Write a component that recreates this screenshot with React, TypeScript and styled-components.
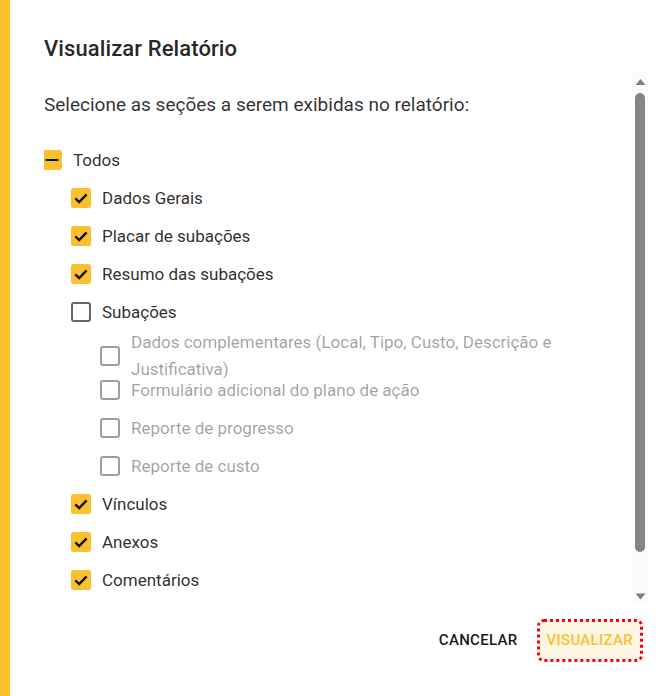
import { createGlobalStyle, styled } from "styled-components";

const YELLOW = "#fbc02d";

const GlobalStyle = createGlobalStyle`
  html, body {
    margin: 0;
    padding: 0;
  }
  body {
    font-family: Roboto, "Noto Sans", Arial, sans-serif;
    background: #fff;
  }
  * {
    box-sizing: border-box;
  }
`;

const Screen = styled.div`
  width: 670px;
  height: 696px;
  display: flex;
  border-left: 10px solid ${YELLOW};
  background: #fff;
  overflow: hidden;
`;

const Dialog = styled.section`
  flex: 1;
  display: flex;
  flex-direction: column;
  padding: 33px 0 0 34px;
`;

const Title = styled.h2`
  margin: 0;
  font-size: 22px;
  font-weight: 500;
  line-height: 32px;
  letter-spacing: 0.1px;
  color: rgba(0, 0, 0, 0.87);
`;

const Body = styled.div`
  display: flex;
  height: 533px;
  margin: 7px 22px 0 0;
`;

const Content = styled.div`
  flex: 1;
  overflow: hidden;
  padding-top: 21px;
`;

const ScrollBar = styled.div`
  width: 15px;
  display: flex;
  flex-direction: column;
  background: #fbfbfb;
`;

const ScrollArrow = styled.div`
  height: 15px;
  display: flex;
`;

const ScrollTrack = styled.div`
  flex: 1;
  padding: 6px 3px 0 2px;
`;

const Thumb = styled.div`
  height: 459px;
  border-radius: 5px;
  background: #858585;
`;

const Intro = styled.p`
  margin: 0 0 24px;
  font-size: 19px;
  line-height: 24px;
  color: rgba(0, 0, 0, 0.82);
`;

const List = styled.div`
  display: flex;
  flex-direction: column;
`;

const Row = styled.label<{ $level: number; $tall?: boolean }>`
  display: flex;
  align-items: center;
  gap: 11px;
  height: ${(p) => (p.$tall ? 40 : 38)}px;
  padding-top: ${(p) => (p.$tall ? 10 : 0)}px;
  margin-left: ${(p) => p.$level * 29 - 2}px;
  cursor: pointer;
`;

const Label = styled.span<{ $disabled?: boolean; $tall?: boolean }>`
  font-size: 17px;
  line-height: ${(p) => (p.$tall ? 27 : 24)}px;
  color: ${(p) => (p.$disabled ? "rgba(0, 0, 0, 0.38)" : "rgba(0, 0, 0, 0.84)")};
`;

const Actions = styled.div`
  display: flex;
  justify-content: flex-end;
  align-items: center;
  gap: 14px;
  padding: 17px 30px 0 0;
`;

const Button = styled.button<{ $primary?: boolean }>`
  font-family: inherit;
  font-size: 15px;
  font-weight: 500;
  letter-spacing: 0.3px;
  text-transform: uppercase;
  line-height: 25px;
  padding: 6px ${(p) => (p.$primary ? 7 : 8)}px;
  border: none;
  border-radius: 4px;
  cursor: pointer;
  color: ${(p) => (p.$primary ? YELLOW : "rgba(0, 0, 0, 0.92)")};
  background: ${(p) => (p.$primary ? "#fef6e4" : "transparent")};
  outline: ${(p) => (p.$primary ? "3px dotted #ff0000" : "none")};
`;

type BoxState = "checked" | "unchecked" | "indeterminate";

function Box({ state, disabled }: { state: BoxState; disabled?: boolean }) {
  if (state === "unchecked") {
    return (
      <svg width="20" height="20" viewBox="0 0 20 20" style={{ flex: "none" }}>
        <rect
          x="1"
          y="1"
          width="18"
          height="18"
          rx="2"
          fill="none"
          stroke={disabled ? "rgba(0,0,0,0.38)" : "rgba(0,0,0,0.6)"}
          strokeWidth="2"
        />
      </svg>
    );
  }
  return (
    <svg width="20" height="20" viewBox="0 0 20 20" style={{ flex: "none" }}>
      <rect x="0" y="0" width="20" height="20" rx="2.5" fill={YELLOW} />
      {state === "checked" ? (
        <path d="M4.3 10.3 L8.2 14 L15.6 6.4" fill="none" stroke="#111" strokeWidth="2.4" />
      ) : (
        <rect x="3.5" y="9" width="13" height="2" fill="#111" />
      )}
    </svg>
  );
}

type Item = {
  label: string;
  level: number;
  state: BoxState;
  disabled?: boolean;
  tall?: boolean;
};

const items: Item[] = [
  { label: "Todos", level: 0, state: "indeterminate" },
  { label: "Dados Gerais", level: 1, state: "checked" },
  { label: "Placar de subações", level: 1, state: "checked" },
  { label: "Resumo das subações", level: 1, state: "checked" },
  { label: "Subações", level: 1, state: "unchecked" },
  {
    label: "Dados complementares (Local, Tipo, Custo, Descrição e Justificativa)",
    level: 2,
    state: "unchecked",
    disabled: true,
    tall: true,
  },
  { label: "Formulário adicional do plano de ação", level: 2, state: "unchecked", disabled: true },
  { label: "Reporte de progresso", level: 2, state: "unchecked", disabled: true },
  { label: "Reporte de custo", level: 2, state: "unchecked", disabled: true },
  { label: "Vínculos", level: 1, state: "checked" },
  { label: "Anexos", level: 1, state: "checked" },
  { label: "Comentários", level: 1, state: "checked" },
];

export default function App() {
  return (
    <>
      <GlobalStyle />
      <Screen>
        <Dialog>
          <Title>Visualizar Relatório</Title>
          <Body>
            <Content>
              <Intro>Selecione as seções a serem exibidas no relatório:</Intro>
              <List>
                {items.map((item) => (
                  <Row key={item.label} $level={item.level} $tall={item.tall}>
                    <Box state={item.state} disabled={item.disabled} />
                    <Label $disabled={item.disabled} $tall={item.tall}>
                      {item.label}
                    </Label>
                  </Row>
                ))}
              </List>
            </Content>
            <ScrollBar>
              <ScrollArrow>
                <svg width="15" height="15" viewBox="0 0 15 15">
                  <polygon points="2.5,13 12.5,13 7.5,7" fill="#808080" />
                </svg>
              </ScrollArrow>
              <ScrollTrack>
                <Thumb />
              </ScrollTrack>
              <ScrollArrow>
                <svg width="15" height="15" viewBox="0 0 15 15">
                  <polygon points="2.5,3.5 12.5,3.5 7.5,9.5" fill="#808080" />
                </svg>
              </ScrollArrow>
            </ScrollBar>
          </Body>
          <Actions>
            <Button>Cancelar</Button>
            <Button $primary>Visualizar</Button>
          </Actions>
        </Dialog>
      </Screen>
    </>
  );
}
